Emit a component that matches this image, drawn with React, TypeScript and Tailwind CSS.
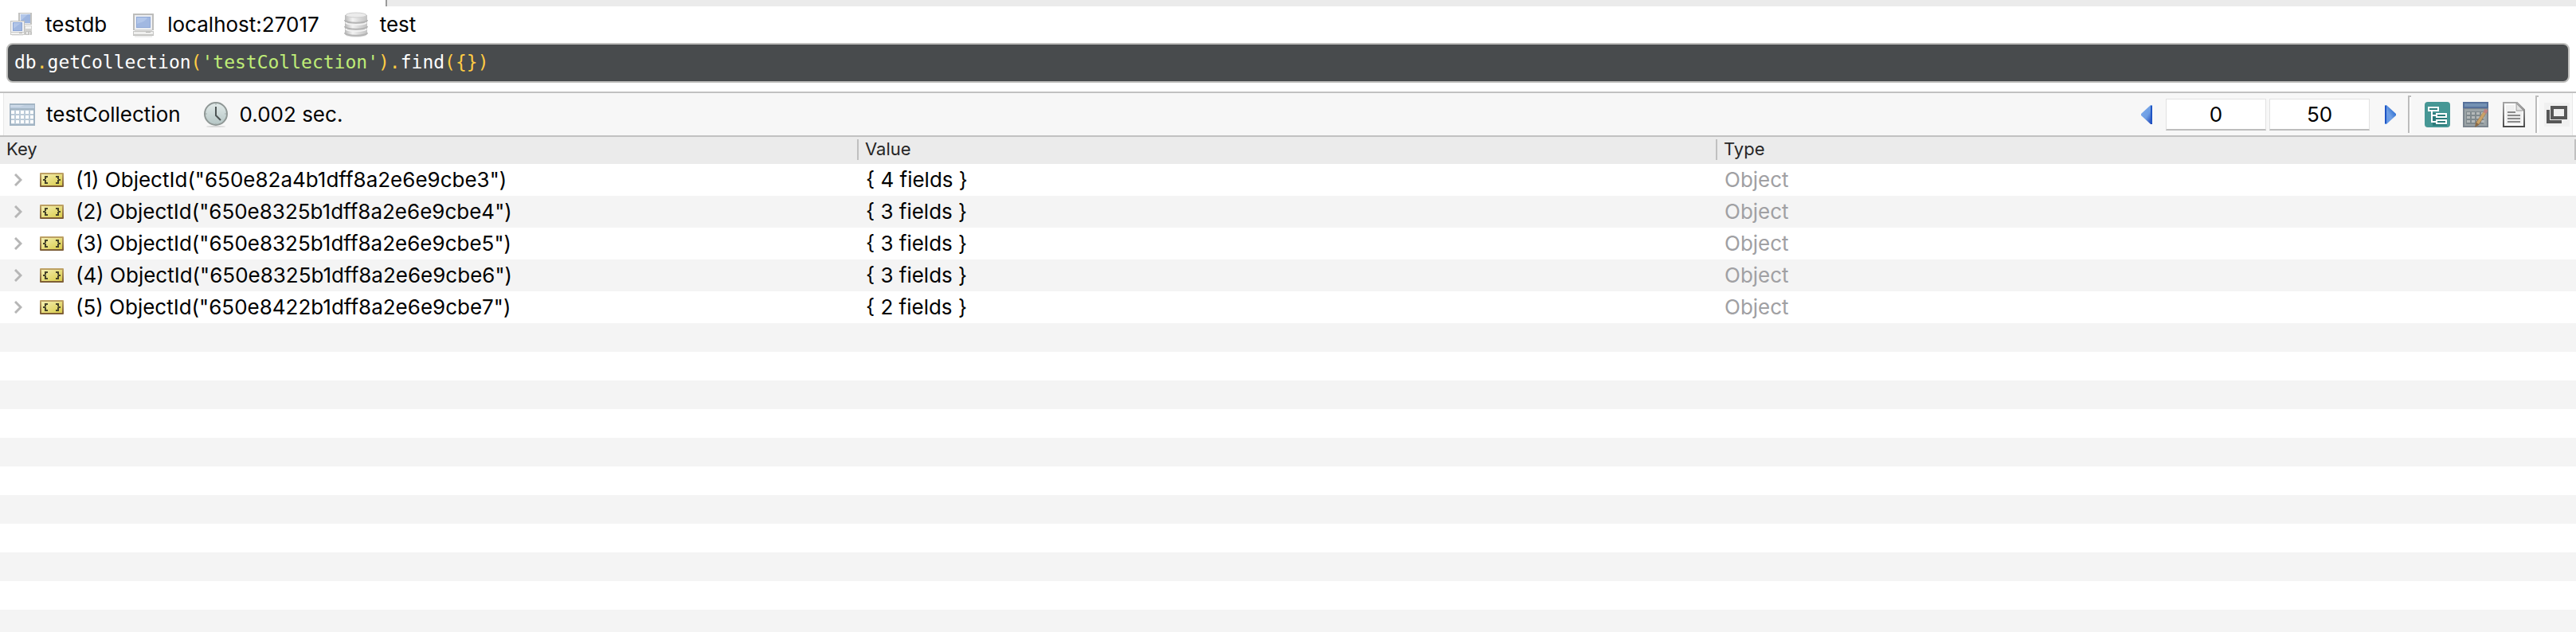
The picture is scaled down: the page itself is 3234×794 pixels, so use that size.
import React, { useState } from "react";

type Row = { id: string; fields: number };

const rows: Row[] = [
  { id: "650e82a4b1dff8a2e6e9cbe3", fields: 4 },
  { id: "650e8325b1dff8a2e6e9cbe4", fields: 3 },
  { id: "650e8325b1dff8a2e6e9cbe5", fields: 3 },
  { id: "650e8325b1dff8a2e6e9cbe6", fields: 3 },
  { id: "650e8422b1dff8a2e6e9cbe7", fields: 2 },
];

// - Icons
const ConnectionIcon = () => (
  <svg className="size-8 shrink-0" viewBox="0 0 32 32" aria-hidden="true">
    <rect x="12" y="1" width="17" height="15" fill="#c2c2c0" />
    <rect x="14" y="2" width="13" height="13" fill="#e9ecf1" />
    <rect x="15" y="3" width="12" height="11" fill="#9db5df" />
    <path d="M15 3h9l-9 8z" fill="#b3c7e9" />
    <rect x="20" y="17" width="9" height="7" fill="#d2d2d0" />
    <rect x="21" y="18" width="7" height="3" fill="#f4f4f4" />
    <rect x="20" y="24" width="9" height="5" rx="1" fill="#c4c4c2" />
    <rect x="22" y="25" width="2" height="3" fill="#ececec" />
    <rect x="26" y="25" width="1" height="4" fill="#ececec" />
    <rect x="2" y="11" width="18" height="15" fill="#c0c0be" />
    <rect x="3" y="12" width="16" height="13" fill="#eff0f3" />
    <rect x="5" y="13" width="12" height="11" fill="#8ba5d6" />
    <rect x="6" y="14" width="10" height="9" fill="#9fb6e0" />
    <path d="M6 14h9l-9 7z" fill="#b2c5e8" />
    <rect x="2" y="25" width="18" height="4" fill="#cbcbc9" />
    <rect x="3" y="26" width="16" height="2" fill="#f2f2f1" />
    <rect x="13" y="26" width="4" height="1" fill="#b8b8b6" />
    <rect x="4" y="29" width="14" height="1" fill="#ededed" />
  </svg>
);

const HostIcon = () => (
  <svg className="size-8 shrink-0" viewBox="0 0 32 32" aria-hidden="true">
    <rect x="3" y="2" width="26" height="21" fill="#bdbdbb" />
    <rect x="5" y="4" width="22" height="18" fill="#eceef2" />
    <rect x="7" y="6" width="18" height="14" fill="#90a9d8" />
    <rect x="8" y="7" width="16" height="12" fill="#a1b8e1" />
    <path d="M8 7h13c-2 5-8 6-13 8z" fill="#b2c6e9" />
    <rect x="5" y="22" width="22" height="2" fill="#d8d8d7" />
    <rect x="3" y="24" width="26" height="6" fill="#c6c6c4" />
    <rect x="4" y="25" width="24" height="3" fill="#efefee" />
    <rect x="19" y="25" width="6" height="1" fill="#b9b9b7" />
    <rect x="5" y="30" width="22" height="2" fill="#efefef" />
  </svg>
);

const DatabaseIcon = () => (
  <svg className="size-8 shrink-0" viewBox="0 0 32 32" aria-hidden="true">
    <defs>
      <linearGradient id="disk" x1="0" x2="1">
        <stop offset="0" stopColor="#b9b9b9" />
        <stop offset="0.35" stopColor="#f3f3f3" />
        <stop offset="0.65" stopColor="#d9d9d9" />
        <stop offset="1" stopColor="#c3c3c3" />
      </linearGradient>
    </defs>
    <ellipse cx="16" cy="29" rx="13" ry="3" fill="#ececec" />
    <path d="M2 4v22c0 6 28 6 28 0V4z" fill="url(#disk)" />
    <path d="M2 10c0 5 28 5 28 0M2 18c0 5 28 5 28 0M2 26c0 5 28 5 28 0" fill="none" stroke="#b4b4b4" strokeWidth="2" />
    <path d="M3 13c1 4 25 4 26 0M3 21c1 4 25 4 26 0" fill="none" stroke="#f1f1f1" strokeWidth="2" />
    <ellipse cx="16" cy="4" rx="13" ry="3" fill="#ebebeb" stroke="#cfcfcf" />
  </svg>
);

const CollectionIcon = () => (
  <svg className="size-8 shrink-0" viewBox="0 0 32 32" aria-hidden="true">
    <rect x="0" y="2" width="32" height="28" fill="#a3b5c4" />
    <rect x="1" y="4" width="30" height="4" fill="#bfcfe0" />
    <path d="M1 4h18l-6 2H1z" fill="#d0dcea" />
    <rect x="2" y="10" width="28" height="18" fill="#bccbd8" />
    <g fill="#fff">
      {[10, 16, 22].map((y) =>
        [2, 8, 14, 20, 26].map((x) => <rect key={`${x}-${y}`} x={x} y={y + 1} width="4" height="4" />)
      )}
    </g>
  </svg>
);

const ClockIcon = () => (
  <svg className="size-8 shrink-0" viewBox="0 0 32 32" aria-hidden="true">
    <defs>
      <linearGradient id="dial" x1="0" y1="0" x2="0" y2="1">
        <stop offset="0" stopColor="#e3ebea" />
        <stop offset="1" stopColor="#b4c5c4" />
      </linearGradient>
    </defs>
    <ellipse cx="16" cy="31" rx="12" ry="1" fill="#d9d9d9" />
    <circle cx="16" cy="15" r="14" fill="url(#dial)" stroke="#8f9795" strokeWidth="2" />
    <path d="M16 6v11l6 6" fill="none" stroke="#4e5555" strokeWidth="2" />
    <path d="M16 2v2M16 27v2M3 15h2M27 15h2" stroke="#9fabaa" />
  </svg>
);

const Arrow = ({ flip = false }: { flip?: boolean }) => (
  <svg className={flip ? "h-6 w-[14px] rotate-180" : "h-6 w-[14px]"} viewBox="0 0 14 24" aria-hidden="true">
    <defs>
      <linearGradient id={flip ? "arrowR" : "arrowL"} x1="0" y1={flip ? "1" : "0"} x2="1" y2={flip ? "0" : "1"}>
        <stop offset="0.2" stopColor={flip ? "#2f6fd2" : "#79a7ea"} />
        <stop offset="0.55" stopColor="#6f9fe4" />
        <stop offset="1" stopColor={flip ? "#5c93e6" : "#1238b4"} />
      </linearGradient>
    </defs>
    <path d="M14 0v24h-2L0 13v-2L12 0z" fill={flip ? "url(#arrowR)" : "url(#arrowL)"} />
    <path d="M13 1v22" stroke="#1f55c4" strokeWidth="2" />
  </svg>
);

const TreeModeIcon = () => (
  <svg className="size-8" viewBox="0 0 32 32" aria-hidden="true">
    <rect width="32" height="32" rx="4" fill="#479795" />
    <path d="M6 8h12v4H6zM10 14h18v16H10z" fill="#2b7b7a" />
    <g fill="none" stroke="#fff" strokeWidth="2">
      <path d="M5 7h12v4H5z" />
      <path d="M9 12v13h6M9 17h6" />
      <path d="M15 15h12v4H15zM15 23h12v4H15z" />
    </g>
  </svg>
);

const TableModeIcon = () => (
  <svg className="size-8" viewBox="0 0 32 32" aria-hidden="true">
    <rect width="32" height="32" fill="#7c858e" />
    <rect width="32" height="8" fill="#56719b" />
    <rect x="2" y="2" width="28" height="4" fill="#7391b3" />
    <rect x="2" y="9" width="28" height="21" fill="#9ba3a6" />
    <rect x="4" y="12" width="22" height="16" fill="#7f898d" />
    <g fill="#b4b8b9">
      {[13, 18, 23].map((y) =>
        [5, 11, 17, 23].map((x) => <rect key={`${x}-${y}`} x={x} y={y} width="4" height="3" />)
      )}
    </g>
    <path d="M27 11l3 2-10 16-5 3 1-6z" fill="#8a6a48" />
    <path d="M26 12l3 2-9 14-3-2z" fill="#c9a268" />
    <path d="M27 9l4 1v2l-2 3-3-2z" fill="#bf8080" />
  </svg>
);

const TextModeIcon = () => (
  <svg className="size-8" viewBox="0 0 32 32" aria-hidden="true">
    <defs>
      <linearGradient id="sheet" x1="0" y1="0" x2="0" y2="1">
        <stop offset="0" stopColor="#a6a6a6" />
        <stop offset="1" stopColor="#4b4b4b" />
      </linearGradient>
    </defs>
    <path d="M3 1h17l9 9v21H3z" fill="#fff" stroke="url(#sheet)" strokeWidth="2" />
    <path d="M6 4h11v7h9v17H6z" fill="#f0f0f0" />
    <path d="M19 2v9h9z" fill="#e4e4e4" stroke="#9b9b9b" />
    <path d="M8 13h10M8 17h16M8 21h16M8 25h16" stroke="#8a8a8a" strokeWidth="2" />
  </svg>
);

const WindowIcon = () => (
  <svg className="h-[30px] w-8" viewBox="0 0 32 30" aria-hidden="true">
    <path d="M10 6h17v13H10z" fill="none" stroke="#575757" strokeWidth="4" />
    <path d="M5 9v15h17" fill="none" stroke="#575757" strokeWidth="4" />
  </svg>
);

const DocumentIcon = () => (
  <svg className="h-[18px] w-[30px] shrink-0" viewBox="0 0 30 18" aria-hidden="true">
    <defs>
      <linearGradient id="gold" x1="0" y1="0" x2="1" y2="1">
        <stop offset="0" stopColor="#f4eeb0" />
        <stop offset="1" stopColor="#d9cc4a" />
      </linearGradient>
      <linearGradient id="rim" x1="0" y1="0" x2="0" y2="1">
        <stop offset="0" stopColor="#c1a568" />
        <stop offset="1" stopColor="#7a5a34" />
      </linearGradient>
    </defs>
    <rect width="30" height="18" rx="1" fill="url(#rim)" />
    <rect x="2" y="2" width="26" height="14" fill="url(#gold)" />
    <path d="M10 4H6v4H4v2h2v4h4v-2H8V9H7V8h1V6h2z" fill="#46432a" />
    <path d="M20 4h4v4h2v2h-2v4h-4v-2h2V9h1V8h-1V6h-2z" fill="#46432a" />
  </svg>
);

const Chevron = () => (
  <svg className="h-4 w-[10px]" viewBox="0 0 10 16" aria-hidden="true">
    <path d="M1 1l7 7-7 7" fill="none" stroke="#b6b6b6" strokeWidth="3" />
  </svg>
);

const Separator = () => <div className="h-[47px] w-1 border-t-2 border-l-2 border-[#bcbcbc] bg-white" />;

// - Shell window
const App = () => {
  const [skip, setSkip] = useState("0");
  const [limit, setLimit] = useState("50");

  return (
    <div className="flex h-screen flex-col overflow-hidden bg-white font-['Inter','Liberation_Sans',sans-serif] text-[26px] leading-[30px] text-black">
      {/*// - Tab strip edge */}
      <div className="flex h-2 shrink-0">
        <div className="w-[484px]" />
        <div className="flex-1 border-l-2 border-[#9a9a9a] bg-[#ebebeb]" />
      </div>

      {/*// - Breadcrumb */}
      <nav className="flex h-[46px] shrink-0 items-center gap-[30px] pl-[11px]">
        <div className="flex items-center gap-[14px]">
          <ConnectionIcon />
          <span>testdb</span>
        </div>
        <div className="flex items-center gap-[14px]">
          <HostIcon />
          <span>localhost:27017</span>
        </div>
        <div className="flex items-center gap-[14px]">
          <DatabaseIcon />
          <span>test</span>
        </div>
      </nav>

      {/*// - Query editor */}
      <div
        role="textbox"
        aria-label="Query"
        contentEditable
        suppressContentEditableWarning
        spellCheck={false}
        className="mx-2 mb-[11px] h-[50px] shrink-0 rounded-lg border-2 border-[#bfbfbd] bg-[#484b4d] px-2 pt-1 font-['DejaVu_Sans_Mono',monospace] text-[23px] leading-9 whitespace-pre text-white"
      >
        db<span className="text-[#ffcc44]">.</span>getCollection<span className="text-[#ffcc44]">(</span>
        <span className="text-[#bfed77]">'testCollection'</span>
        <span className="text-[#ffcc44]">).</span>find<span className="text-[#ffcc44]">{"({})"}</span>
      </div>

      {/*// - Result toolbar */}
      <div className="shrink-0 border-y-2 border-[#c1c1c1] px-1">
        <div className="flex h-[53px] items-center border-x border-[#e8e8e8] bg-[#f7f7f7] pr-[3px] pl-[7px]">
          <CollectionIcon />
          <span className="ml-[14px]">testCollection</span>
          <span className="ml-7">
            <ClockIcon />
          </span>
          <span className="ml-[14px]">0.002 sec.</span>

          <div className="ml-auto flex items-center">
            <button aria-label="Previous page" className="mr-[17px] flex">
              <Arrow />
            </button>
            <div className="flex gap-1">
              <input
                aria-label="Skip"
                value={skip}
                onChange={(e) => setSkip(e.target.value)}
                className="h-10 w-[126px] border border-b-2 border-[#e2e2e2] border-b-[#bdbdbd] bg-white text-center outline-none"
              />
              <input
                aria-label="Limit"
                value={limit}
                onChange={(e) => setLimit(e.target.value)}
                className="h-10 w-[126px] border border-b-2 border-[#e2e2e2] border-b-[#bdbdbd] bg-white text-center outline-none"
              />
            </div>
            <button aria-label="Next page" className="mr-[15px] ml-[19px] flex">
              <Arrow flip />
            </button>
            <Separator />
            <div className="mr-[11px] ml-[17px] flex gap-4">
              <button aria-label="Tree mode">
                <TreeModeIcon />
              </button>
              <button aria-label="Table mode">
                <TableModeIcon />
              </button>
              <button aria-label="Text mode">
                <TextModeIcon />
              </button>
            </div>
            <Separator />
            <button aria-label="Open in window" className="ml-[7px] flex bg-[#f0f0f0]">
              <WindowIcon />
            </button>
          </div>
        </div>
      </div>

      {/*// - Documents */}
      <table className="w-full shrink-0 table-fixed border-collapse text-left">
        <thead>
          <tr className="h-[34px] bg-[#ebebeb] text-[22px] leading-6 text-[#262626]">
            {["Key", "Value", "Type"].map((title) => (
              <th key={title} className="p-0 pb-[2px] font-normal">
                <div className="border-r-2 border-[#c0c0c0] pb-[2px] pl-2">{title}</div>
              </th>
            ))}
          </tr>
        </thead>
        <tbody>
          {rows.map((row, i) => (
            <tr key={row.id} className="h-10 even:bg-[#f4f4f4]">
              <td className="p-0">
                <div className="flex items-center pl-[18px]">
                  <button aria-label="Expand document">
                    <Chevron />
                  </button>
                  <span className="mr-[15px] ml-[22px]">
                    <DocumentIcon />
                  </span>
                  <span className="whitespace-nowrap">
                    ({i + 1}) ObjectId("{row.id}")
                  </span>
                </div>
              </td>
              <td className="p-0 pl-[9px]">{`{ ${row.fields} fields }`}</td>
              <td className="p-0 pl-[9px] text-[#a0a0a3]">Object</td>
            </tr>
          ))}
        </tbody>
      </table>

      {/*// - Empty striped rows */}
      <div className="flex-1 bg-[repeating-linear-gradient(to_bottom,#f4f4f4_0px,#f4f4f4_36px,#ffffff_36px,#ffffff_72px)]" />
    </div>
  );
};

export default App;
